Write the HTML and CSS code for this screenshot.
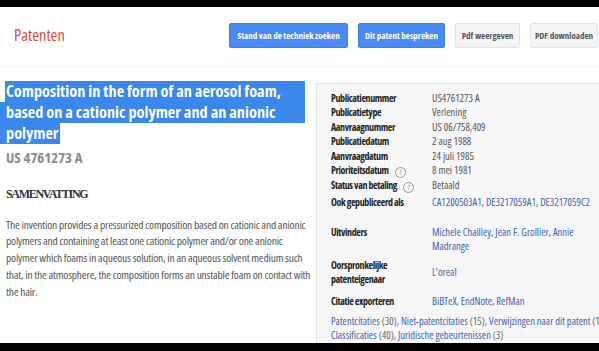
FILE: index.html
```html
<!DOCTYPE html>
<html lang="nl">
<head>
    <meta charset="UTF-8">
    <title>Patenten - US4761273 A</title>
    <link rel="stylesheet" href="styles.css">
</head>
<body>
    <div class="screen">
        <header class="topbar">
            <div class="brand">Patenten</div>
            <div class="actions">
                <button class="btn btn-blue btn-search">Stand van de techniek zoeken</button>
                <button class="btn btn-blue btn-discuss">Dit patent bespreken</button>
                <button class="btn btn-gray btn-view">Pdf weergeven</button>
                <button class="btn btn-gray btn-download">PDF downloaden</button>
            </div>
        </header>
        <main class="content">
            <section class="summary">
                <h1 class="title">
                    <span class="sel-line sel-first">Composition in the form of an aerosol foam,</span>
                    <span class="sel-line">based on a cationic polymer and an anionic</span>
                    <span class="sel-end">polymer</span>
                </h1>
                <div class="pubnum">US 4761273 A</div>
                <h2 class="section-head">SAMENVATTING</h2>
                <p class="abstract">The invention provides a pressurized composition based on cationic and anionic<br>
                    polymers and containing at least one cationic polymer and/or one anionic<br>
                    polymer which foams in aqueous solution, in an aqueous solvent medium such<br>
                    that, in the atmosphere, the composition forms an unstable foam on contact with<br>
                    the hair.</p>
            </section>
            <aside class="meta">
                <div class="facts">
                    <div class="label">Publicatienummer</div><div class="value">US4761273 A</div>
                    <div class="label">Publicatietype</div><div class="value">Verlening</div>
                    <div class="label">Aanvraagnummer</div><div class="value">US 06/758,409</div>
                    <div class="label">Publicatiedatum</div><div class="value">2 aug 1988</div>
                    <div class="label">Aanvraagdatum</div><div class="value">24 juli 1985</div>
                    <div class="label">Prioriteitsdatum <span class="help">?</span></div><div class="value">8 mei 1981</div>
                    <div class="label">Status van betaling <span class="help">?</span></div><div class="value">Betaald</div>
                </div>
                <div class="drow drow-first">
                    <div class="label">Ook gepubliceerd als</div>
                    <div class="value links"><a href="#">CA1200503A1</a>, <a href="#">DE3217059A1</a>, <a href="#">DE3217059C2</a></div>
                </div>
                <div class="drow drow-inventors">
                    <div class="label">Uitvinders</div>
                    <div class="value links"><a href="#">Michele Chailley</a>, <a href="#">Jean F. Grollier</a>, <a href="#">Annie</a><br><a href="#">Madrange</a></div>
                </div>
                <div class="drow drow-middle">
                    <div class="label">Oorspronkelijke<br>patenteigenaar</div>
                    <div class="value links"><a href="#">L'oreal</a></div>
                </div>
                <div class="drow drow-export">
                    <div class="label">Citatie exporteren</div>
                    <div class="value links"><a href="#">BiBTeX</a>, <a href="#">EndNote</a>, <a href="#">RefMan</a></div>
                </div>
                <div class="navlinks">
                    <a href="#">Patentcitaties</a> (30), <a href="#">Niet-patentcitaties</a> (15), <a href="#">Verwijzingen naar dit patent</a> (103)<br>
                    <a href="#">Classificaties</a> (40), <a href="#">Juridische gebeurtenissen</a> (3)
                </div>
            </aside>
        </main>
    </div>
</body>
</html>
```

FILE: styles.css
```css
body {
    margin: 0;
    padding: 7px 0 8px;
    background: #000;
    font-family: "Open Sans", "Liberation Sans", Arial, sans-serif;
    font-stretch: 75%;
}
.screen {
    height: 336px;
    background: #fff;
    overflow: hidden;
}

/* top bar */
.topbar {
    display: flex;
    align-items: flex-start;
    height: 60px;
    padding-top: 16px;
    box-sizing: border-box;
    border-bottom: 1px solid #efefef;
}
.brand {
    padding: 2px 0 0 14px;
    font-size: 16.5px;
    line-height: 20px;
    color: #dc4e41;
}
.actions {
    display: flex;
    gap: 10px;
    margin-left: auto;
    padding-right: 1px;
}
.btn {
    height: 25px;
    padding: 0;
    border-radius: 2px;
    font-family: inherit;
    font-stretch: 75%;
    font-size: 9px;
    font-weight: bold;
    white-space: nowrap;
    cursor: pointer;
}
.btn-blue {
    background: #4a8af4;
    border: 1px solid #3f7fe8;
    color: #fff;
}
.btn-gray {
    background: #f5f5f5;
    border: 1px solid #e4e4e4;
    color: #555;
}
.btn-search { width: 119px; }
.btn-discuss { width: 87px; }
.btn-view { width: 65px; }
.btn-download { width: 68px; }

/* main area */
.content {
    display: flex;
    padding-top: 14px;
}
.summary {
    width: 305px;
    flex-shrink: 0;
    white-space: nowrap;
}
.title {
    margin: 0;
    font-size: 16.3px;
    line-height: 21px;
    font-weight: bold;
    color: #fff;
}
.sel-line {
    display: block;
    padding-left: 6px;
    background: #3a87ee;
}
.sel-first {
    margin-left: 5px;
    padding-left: 1px;
}
.sel-end {
    display: inline-block;
    padding: 0 1px 0 6px;
    background: #3a87ee;
}
.pubnum {
    margin-top: 2.5px;
    padding-left: 6px;
    font-size: 14.8px;
    line-height: 20px;
    font-weight: bold;
    color: #8c8c8c;
}
.section-head {
    margin: 20px 0 0 6px;
    font-family: "Liberation Serif", "Times New Roman", serif;
    font-size: 12px;
    line-height: 14px;
    letter-spacing: -1.3px;
    color: #333;
}
.abstract {
    margin: 16px 0 0;
    padding-left: 6px;
    font-size: 11.5px;
    line-height: 16.8px;
    letter-spacing: -0.2px;
    color: #555;
}

/* right panel */
.meta {
    flex: 1;
    margin: 2px 0 0 11px;
    padding: 7px 0 0 14px;
    background: #f7f7f7;
    border: 1px solid #e2e2e2;
    border-right: none;
    font-size: 10.5px;
    line-height: 14.4px;
    white-space: nowrap;
    overflow: hidden;
}
.facts {
    display: grid;
    grid-template-columns: 101px auto;
}
.label {
    font-size: 10px;
    font-weight: bold;
    letter-spacing: -0.4px;
    color: #222;
}
.value {
    color: #555;
}
.help {
    display: inline-block;
    width: 9px;
    height: 9px;
    margin-left: 5px;
    border: 1px solid #999;
    border-radius: 50%;
    font-size: 7px;
    line-height: 9px;
    font-weight: normal;
    letter-spacing: 0;
    text-align: center;
    color: #888;
    vertical-align: -1px;
}
.drow {
    display: grid;
    grid-template-columns: 101px auto;
    margin-top: 7px;
}
.drow-first {
    margin-top: 1.5px;
}
.drow-inventors {
    margin-top: 16px;
}
.drow-middle {
    margin-top: 4px;
    align-items: center;
}
.links a,
.navlinks a {
    color: #3b64b5;
    text-decoration: none;
}
.navlinks {
    margin-top: 6px;
    color: #666;
}
```
